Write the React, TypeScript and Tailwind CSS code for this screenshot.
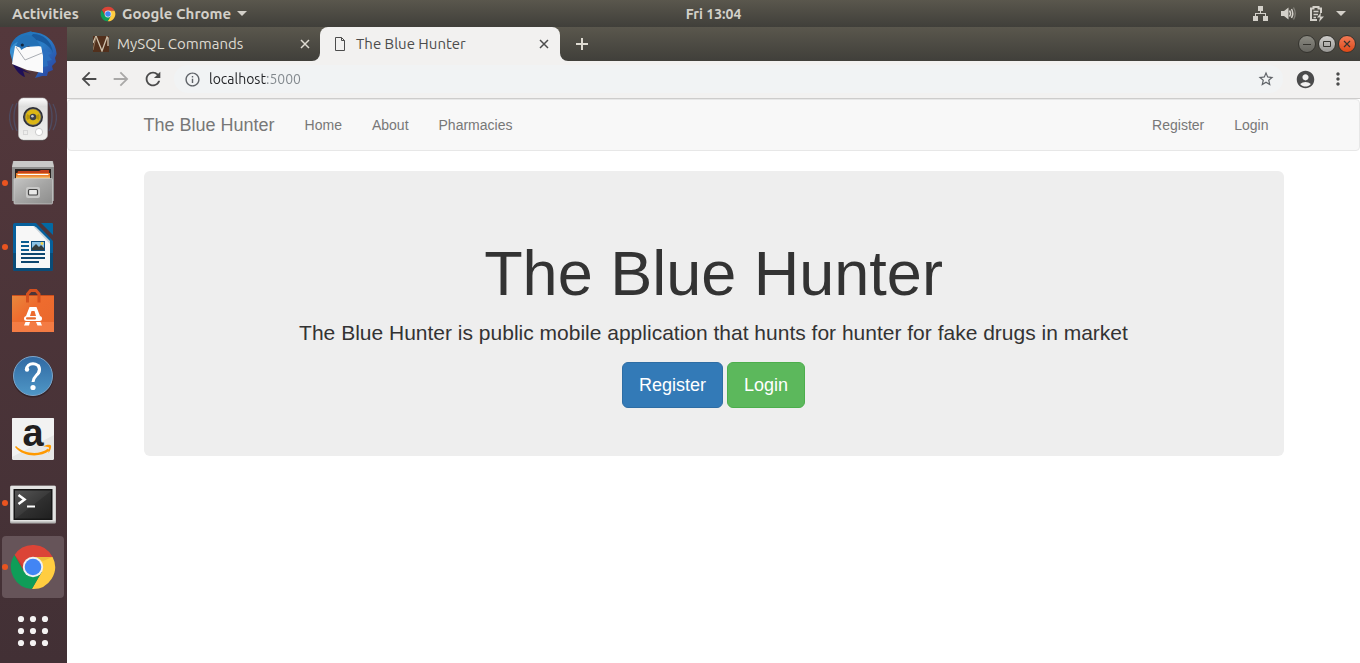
import { useState } from "react";
import type { ReactNode } from "react";
import {
  MdAccountCircle,
  MdArrowBack,
  MdArrowForward,
  MdInfoOutline,
  MdMoreVert,
  MdRefresh,
  MdStarBorder,
} from "react-icons/md";

function ChromeLogo({ className }: { className: string }) {
  return (
    <svg viewBox="0 0 48 48" className={className} aria-hidden="true">
      <path d="M5.5 12A22 22 0 0 1 43.6 14L24 14L15.3 29Z" fill="#db4437" />
      <path d="M43.6 14A22 22 0 0 1 22.9 46L32.7 29L24 14Z" fill="#ffcd40" />
      <path d="M22.9 46A22 22 0 0 1 5.5 12L15.3 29L32.7 29Z" fill="#0f9d58" />
      <path d="M24 14H43.6L34 18L31 17Z" fill="#b98b2c" opacity=".25" />
      <path d="M15.3 29L5.5 12L9 16L15 24Z" fill="#7d2a20" opacity=".25" />
      <circle cx="24" cy="24" r="10.2" fill="#f1f1f1" />
      <circle cx="24" cy="24" r="8.3" fill="#4285f4" />
    </svg>
  );
}

function MailIcon() {
  return (
    <svg viewBox="0 0 48 48" className="size-12" aria-hidden="true">
      <defs>
        <linearGradient id="bird" x1="0" y1="0" x2="1" y2="1">
          <stop offset="0" stopColor="#1d6fb5" />
          <stop offset=".5" stopColor="#2a7cc5" />
          <stop offset="1" stopColor="#2b3b9c" />
        </linearGradient>
      </defs>
      <path d="M3 32C7 40 12 45 16 46L14 40L22 43Z" fill="#1f0f57" />
      <path d="M1 22C0 12 7 4 16 2L23 0L22 1C36 1 47 10 47.6 23L46 27L47 31L43 35L44 39L39 41L38 45L33 45L26 47L30 40L20 14L3 22Z" fill="url(#bird)" />
      <path d="M24 3C34 3 43 10 44 22C40 13 32 9 20 8Z" fill="#195a9e" />
      <path d="M1 22C1 16 5 12 9 11L7 15L11 19L4 32Z" fill="#3a8fd0" />
      <path d="M6 15L17 16L32 15L34 24L34 42L18 39L3 33Z" fill="#fafafa" />
      <path d="M7 16L16 29L33 22" fill="none" stroke="#a9adb3" strokeWidth="1" />
      <path d="M9 11C11 5 17 3 23 5C28 8 29 13 33 16C24 13 18 15 12 19C12 16 9 16 7 15Z" fill="#2370b5" />
      <circle cx="13.3" cy="14" r="1.6" fill="#14273f" />
      <path d="M33 18L43 22L39 24L43 29L38 30L39 35L34 36L34 25Z" fill="#2b6fbf" />
    </svg>
  );
}

function SpeakerIcon() {
  return (
    <svg viewBox="0 0 48 48" className="size-12" aria-hidden="true">
      <defs>
        <linearGradient id="cab" x1="0" y1="0" x2="0" y2="1">
          <stop offset="0" stopColor="#ffffff" />
          <stop offset=".2" stopColor="#dededd" />
          <stop offset="1" stopColor="#f1f1f0" />
        </linearGradient>
      </defs>
      <g fill="none" stroke="#4c5f86" strokeWidth="1.4" opacity=".5">
        <path d="M8 8C4 16 4 28 8 36M4 9C-.5 17-.5 28 4 35M40 8C44 16 44 28 40 36M44 9C48.5 17 48.5 28 44 35" />
      </g>
      <rect x="9.5" y="5" width="29" height="41" rx="5" fill="#1d1518" opacity=".5" />
      <rect x="9.5" y="3" width="29" height="42" rx="5" fill="url(#cab)" stroke="#bcbcbc" strokeWidth=".6" />
      <circle cx="24" cy="22" r="10" fill="#2c2d33" />
      <circle cx="24" cy="22" r="8.6" fill="#5d5f66" />
      <circle cx="24" cy="22" r="7.7" fill="#dbb616" />
      <path d="M24 22L18 19A8 8 0 0 0 18 25ZM24 22L30 19A8 8 0 0 1 30 25Z" fill="#b8980f" />
      <circle cx="24" cy="22" r="3.2" fill="#3b3f4a" />
      <circle cx="23.4" cy="21.3" r="1.3" fill="#c8cbd2" />
      <circle cx="30" cy="37" r="3.6" fill="#fff" stroke="#c2c2c2" strokeWidth=".8" />
      <rect x="14.5" y="35.5" width="4" height="4" fill="none" stroke="#d6d6d6" />
    </svg>
  );
}

function FilesIcon() {
  return (
    <svg viewBox="0 0 48 48" className="size-12" aria-hidden="true">
      <defs>
        <linearGradient id="drawer" x1="0" y1="0" x2="1" y2="1">
          <stop offset="0" stopColor="#c5c5c4" />
          <stop offset=".5" stopColor="#a5a5a4" />
          <stop offset="1" stopColor="#8d8d8c" />
        </linearGradient>
      </defs>
      <path d="M4 2H44L45 8V42H3V8Z" fill="#8f8f8e" />
      <path d="M4.5 2H43.5L45 8H3Z" fill="#c9c9c8" />
      <rect x="6" y="10" width="36" height="12" fill="#2a2422" />
      <path d="M9 12H30L32 11H40V15H8Z" fill="#c4421c" />
      <path d="M7 14H41V21H7Z" fill="#e87722" />
      <path d="M8.5 15.5H39.5" stroke="#fff" strokeWidth="1.2" />
      <path d="M7 17.500H41V21H7Z" fill="#f3b765" />
      <rect x="5" y="19.5" width="38.5" height="25.5" rx="1" fill="url(#drawer)" stroke="#cfcfce" strokeWidth=".7" />
      <rect x="17" y="28" width="14" height="11" rx="2" fill="#c9c9c8" />
      <rect x="19.5" y="30.5" width="9" height="5.5" rx="1" fill="#e9e9e8" stroke="#454545" strokeWidth="1.2" />
    </svg>
  );
}

function WriterIcon() {
  return (
    <svg viewBox="0 0 48 48" className="size-12" aria-hidden="true">
      <path d="M6 0H27L44 18V46Q44 48 42 48H6Q4 48 4 46V2Q4 0 6 0Z" fill="#06609c" />
      <path d="M4 30H44V46Q44 48 42 48H6Q4 48 4 46Z" fill="#0a4c78" />
      <path d="M32 0H43Q44 0 44 1V12Z" fill="#0369a3" />
      <path d="M7 3H25L41 19V45H7Z" fill="#f7f7f7" />
      <path d="M27 4L41 18V21L24 3Z" fill="#c8d3da" />
      <path d="M12 19H20M12 23H20M12 27H20" stroke="#0a5c90" strokeWidth="2" />
      <path d="M12 31H36M12 35H36M12 39H30" stroke="#0d466f" strokeWidth="2" />
      <rect x="22.5" y="18.5" width="13" height="9" fill="#8cc3e6" stroke="#0d4f80" />
      <path d="M23 27V25L27 21L30 24L32 22L35 25V27Z" fill="#353d3c" />
      <circle cx="33" cy="20.500" r="1.4" fill="#f3d34a" />
    </svg>
  );
}

function SoftwareIcon() {
  return (
    <svg viewBox="0 0 48 48" className="size-12" aria-hidden="true">
      <defs>
        <linearGradient id="bag" x1="0" y1="0" x2="1" y2="1">
          <stop offset="0" stopColor="#e9883d" />
          <stop offset=".4" stopColor="#ee6c2e" />
          <stop offset="1" stopColor="#e9672d" />
        </linearGradient>
      </defs>
      <path d="M3 8H45V45H3Z" fill="url(#bag)" />
      <path d="M3 35H45V45H3Z" fill="#ff925f" opacity=".45" />
      <path d="M3 8H45V9H3Z" fill="#c94e1d" />
      <path d="M18.500 15.500V7L21.500 3.500H27L30 7V15.500" fill="none" stroke="#d4501f" strokeWidth="3" />
      <path d="M20.500 20H27.500L31 29H27L25.500 24H22.500L21 29H17Z" fill="#fff" />
      <rect x="15" y="29" width="18" height="5" rx="2.500" fill="#fff" />
      <rect x="17" y="30.300" width="10" height="2.300" rx="1" fill="#e86a2c" />
      <path d="M16.500 35H21L20 38.500H15ZM27 35H31.500L33 38.500H28.500Z" fill="#fff" />
    </svg>
  );
}

function HelpIcon() {
  return (
    <svg viewBox="0 0 48 48" className="size-12" aria-hidden="true">
      <defs>
        <linearGradient id="help" x1="0" y1="0" x2="0" y2="1">
          <stop offset="0" stopColor="#3069a3" />
          <stop offset="1" stopColor="#4f97c6" />
        </linearGradient>
      </defs>
      <circle cx="24" cy="26" r="20.500" fill="#201519" opacity=".45" />
      <circle cx="24" cy="25" r="19.500" fill="url(#help)" stroke="#7fa6ca" />
      <path d="M17.500 19C17 11 30.500 10.500 30.500 18.500C30.500 24 24.500 24 24 31" fill="none" stroke="#fff" strokeWidth="3" />
      <path d="M29 14C31 16 31 21 28.500 23.500" fill="none" stroke="#fff" strokeWidth="3" />
      <circle cx="18" cy="18.500" r="2.200" fill="#fff" />
      <circle cx="24" cy="36.500" r="2.600" fill="#fff" />
    </svg>
  );
}

function AmazonIcon() {
  return (
    <svg viewBox="0 0 48 48" className="size-12 overflow-visible" aria-hidden="true">
      <rect x="3" y="3" width="42" height="42" rx="1.500" fill="#e6e6e6" />
      <path d="M3 4Q3 3 4 3H44Q45 3 45 4V20L3 42Z" fill="#f2f2f2" />
      <text x="24" y="31" textAnchor="middle" fontFamily="Liberation Sans, sans-serif" fontWeight="700" fontSize="38" fill="#221f1f">a</text>
      <path d="M7 31C16 39.500 31 40 39 33.500L40.500 35.500C31 43 14 42 6 32Z" fill="#f90" />
      <path d="M34.500 31.500C37 29.500 41 29.500 42 30.500C42.500 32 41.500 35.500 39.500 38C39 37 40.500 33.500 40 32.500C39 31.500 36 32 34.500 31.500Z" fill="#f90" />
    </svg>
  );
}

function TerminalIcon() {
  return (
    <svg viewBox="0 0 48 48" className="size-12" aria-hidden="true">
      <defs>
        <linearGradient id="screen" x1="0" y1="0" x2="1" y2="1">
          <stop offset="0" stopColor="#555" />
          <stop offset=".5" stopColor="#3b3b3b" />
          <stop offset=".52" stopColor="#303030" />
          <stop offset="1" stopColor="#202020" />
        </linearGradient>
      </defs>
      <rect x="1" y="6.500" width="46" height="38" rx="1.500" fill="#b4b4b3" />
      <rect x="1.500" y="7" width="45" height="35.500" rx="1" fill="#e3e3e2" />
      <rect x="4.500" y="10" width="39" height="31" fill="#161616" />
      <rect x="6" y="11.500" width="36" height="28" fill="url(#screen)" />
      <path d="M9.500 16L15.500 20.500L9.500 25" fill="none" stroke="#fff" strokeWidth="2.600" />
      <path d="M18 27.500H26" stroke="#fff" strokeWidth="2" />
    </svg>
  );
}

function AppsIcon() {
  const at = [12, 24, 36];
  return (
    <svg viewBox="0 0 48 48" className="size-12" aria-hidden="true">
      {at.map((y) => at.map((x) => <circle key={`${x}-${y}`} cx={x} cy={y} r="3.100" fill="#f4f2f2" />))}
    </svg>
  );
}

type DockApp = { label: string; icon: ReactNode; running?: boolean; active?: boolean };

const dockApps: DockApp[] = [
  { label: "Mail", icon: <MailIcon /> },
  { label: "Music", icon: <SpeakerIcon /> },
  { label: "Files", icon: <FilesIcon />, running: true },
  { label: "Writer", icon: <WriterIcon />, running: true },
  { label: "Software", icon: <SoftwareIcon /> },
  { label: "Help", icon: <HelpIcon /> },
  { label: "Amazon", icon: <AmazonIcon /> },
  { label: "Terminal", icon: <TerminalIcon />, running: true },
  { label: "Chrome", icon: <ChromeLogo className="size-12" />, running: true, active: true },
  { label: "Show applications", icon: <AppsIcon /> },
];

function Caret() {
  return (
    <svg viewBox="0 0 10 5" className="h-[5px] w-2.5" aria-hidden="true">
      <path d="M0 0H10L5 5Z" fill="currentColor" />
    </svg>
  );
}

function TopBar() {
  return (
    <header className="grid h-[27px] shrink-0 grid-cols-[67px_1fr_auto_1fr] items-center bg-linear-to-b from-[#5a574d] to-[#403f3a] font-['Ubuntu','Noto_Sans',sans-serif] text-[15px] leading-5 font-semibold text-[#d3d0c9]">
      <div className="col-span-2 flex items-center pl-3">
        <button className="w-[88px] text-left">Activities</button>
        <button className="flex items-center gap-1.5">
          <ChromeLogo className="size-4" />
          Google Chrome
          <Caret />
        </button>
      </div>
      <button className="text-sm leading-5">Fri 13:04</button>
      <div className="flex items-center justify-end gap-3 pr-3.5">
        <svg viewBox="0 0 16 16" className="size-4" aria-label="Network" fill="currentColor">
          <path d="M6 0H11V5H9V7H14V10H16V15H11V10H13V8H4V10H6V15H1V10H3V7H8V5H6Z" />
        </svg>
        <svg viewBox="0 0 16 16" className="size-4" aria-label="Volume" fill="currentColor">
          <path d="M1 5H4L8.500 1.500V13.500L4 10H1Z" />
          <path d="M9.500 4.500Q11.500 7.500 9.500 10.500M11.500 3Q14 7.500 11.500 12" fill="none" stroke="currentColor" strokeWidth="1.500" />
          <path d="M13.500 1.500Q17 7.500 13.500 13.500" fill="none" stroke="currentColor" strokeWidth="1.300" opacity=".4" />
        </svg>
        <svg viewBox="0 0 16 16" className="size-4" aria-label="Battery" fill="none" stroke="currentColor">
          <path d="M9 14H3V2.500H5.500V1H10.500V2.500H13V7" strokeWidth="2" />
          <path d="M5.500 5.500H10.500M5.500 8.500H10M5.500 11.500H8" strokeWidth="1.500" />
          <path d="M13 6.500L9 11.500H12L11 16L16 10.500H12.500Z" fill="currentColor" stroke="none" />
        </svg>
        <Caret />
      </div>
    </header>
  );
}

function Dock() {
  return (
    <nav aria-label="Dock" className="flex w-[67px] shrink-0 flex-col justify-end gap-0.5 overflow-hidden bg-linear-to-b from-[#54383c] to-[#423035] px-0.5 pb-px">
      {dockApps.map((app) => (
        <button
          key={app.label}
          aria-label={app.label}
          className={
            app.active
              ? "relative flex size-[62px] shrink-0 items-center justify-center rounded-sm bg-[#665459]"
              : "relative flex size-[62px] shrink-0 items-center justify-center rounded-sm"
          }
        >
          {app.icon}
          {app.running && <span className="absolute left-0 size-1.5 rounded-full bg-[#e95420]" />}
        </button>
      ))}
    </nav>
  );
}

function CloseGlyph() {
  return (
    <svg viewBox="0 0 10 10" className="size-2.5" aria-hidden="true">
      <path d="M1 1L9 9M9 1L1 9" stroke="currentColor" strokeWidth="1.500" />
    </svg>
  );
}

function TabStrip() {
  return (
    <div className="flex h-[34px] shrink-0 bg-[#f2f1f0] font-['Ubuntu','Noto_Sans',sans-serif] text-[15px] text-[#dfdbd2]">
      <div className="flex w-[253px] items-center gap-2 rounded-br-lg bg-linear-to-b from-[#5a574d] to-[#403f3a] pr-2.5 pl-[26px]">
        <svg viewBox="0 0 16 16" className="size-4" aria-hidden="true">
          <rect width="16" height="16" fill="#52301c" />
          <path d="M0 7L3 0L9 15L14 1L15 2V10" fill="none" stroke="#cfc3ae" strokeWidth="1.300" />
          <path d="M3 1L0 14" fill="none" stroke="#a08a70" strokeWidth=".8" />
        </svg>
        <span className="flex-1">MySQL Commands</span>
        <button aria-label="Close MySQL Commands">
          <CloseGlyph />
        </button>
      </div>
      <div className="w-60 bg-linear-to-b from-[#5a574d] from-0% via-[#504e46] via-50% to-[#f2f1f0] to-50%">
        <div className="flex h-full items-center gap-2 rounded-t-lg bg-[#f2f1f0] pr-[11px] pl-3 text-[#4c4c4c]">
          <svg viewBox="0 0 16 16" className="size-4" aria-hidden="true">
            <path d="M3.500 1.500H9.500L12.500 4.500V14.500H3.500ZM9.500 1.500V4.500H12.500" fill="none" stroke="currentColor" strokeWidth="1" />
          </svg>
          <span className="flex-1">The Blue Hunter</span>
          <button aria-label="Close The Blue Hunter">
            <CloseGlyph />
          </button>
        </div>
      </div>
      <div className="flex flex-1 items-center justify-between rounded-bl-lg bg-linear-to-b from-[#5a574d] to-[#403f3a] pr-1 pl-4">
        <button aria-label="New tab">
          <svg viewBox="0 0 12 12" className="size-3" aria-hidden="true">
            <path d="M6 0V12M0 6H12" stroke="currentColor" strokeWidth="2" />
          </svg>
        </button>
        <div className="flex gap-0.5 text-[#35342f]">
          <button aria-label="Minimize" className="size-[18px] rounded-full border border-[#35342f] bg-linear-to-b from-[#8b8a82] to-[#65645e]">
            <svg viewBox="0 0 16 16" aria-hidden="true"><path d="M4 8.500H12" stroke="currentColor" /></svg>
          </button>
          <button aria-label="Maximize" className="size-[18px] rounded-full border border-[#35342f] bg-linear-to-b from-[#cfcecb] to-[#989794]">
            <svg viewBox="0 0 16 16" aria-hidden="true"><path d="M4.500 5.500H11.500V10.500H4.500Z" fill="none" stroke="currentColor" /></svg>
          </button>
          <button aria-label="Close window" className="size-[18px] rounded-full border border-[#35342f] bg-linear-to-b from-[#f27a54] to-[#dd4814]">
            <svg viewBox="0 0 16 16" aria-hidden="true"><path d="M5 5L11 11M11 5L5 11" stroke="currentColor" strokeWidth="1.200" /></svg>
          </button>
        </div>
      </div>
    </div>
  );
}

function Toolbar() {
  const [address, setAddress] = useState("localhost:5000");
  return (
    <div className="flex h-[38px] shrink-0 items-center border-b border-[#cdcccb] bg-[#f2f1f0] pr-3 pb-px pl-[11px] text-[#4b4b4b]">
      <div className="flex gap-2.5">
        <button aria-label="Back"><MdArrowBack size={22} /></button>
        <button aria-label="Forward" className="text-[#a9a8a7]"><MdArrowForward size={22} /></button>
        <button aria-label="Reload"><MdRefresh size={22} /></button>
      </div>
      <div className="ml-2.5 flex h-7 flex-1 items-center gap-2 rounded-full bg-[#f1f3f4] pr-2 pl-2.5 text-[#5f6368]">
        <MdInfoOutline size={17} />
        <input
          aria-label="Address"
          value={address}
          onChange={(e) => setAddress(e.target.value)}
          className="flex-1 bg-[linear-gradient(90deg,#202124_58px,#80868b_58px)] bg-clip-text font-['Ubuntu','Noto_Sans',sans-serif] text-sm text-transparent caret-black outline-none"
        />
        <button aria-label="Bookmark"><MdStarBorder size={18} /></button>
      </div>
      <button aria-label="Profile" className="ml-3"><MdAccountCircle size={21} /></button>
      <button aria-label="Menu" className="ml-3"><MdMoreVert size={20} /></button>
    </div>
  );
}

function Page() {
  return (
    <div className="flex-1 overflow-auto bg-white font-['Liberation_Sans',Arial,sans-serif] text-[#333]">
      <nav className="rounded border border-[#e7e7e7] bg-[#f8f8f8] text-sm text-[#777]">
        <div className="mx-auto flex h-[50px] max-w-[1170px] items-center px-[15px]">
          <a href="#" className="pr-[15px] text-lg">The Blue Hunter</a>
          <a href="#home" className="px-[15px]">Home</a>
          <a href="#about" className="px-[15px]">About</a>
          <a href="#pharmacies" className="px-[15px]">Pharmacies</a>
          <a href="#register" className="ml-auto px-[15px]">Register</a>
          <a href="#login" className="px-[15px]">Login</a>
        </div>
      </nav>
      <main className="mx-auto mt-5 max-w-[1170px] px-[15px]">
        <section className="rounded-md bg-[#eee] px-[60px] py-12 text-center">
          <h1 className="mt-5 mb-2.5 text-[63px] leading-[69px]">The Blue Hunter</h1>
          <p className="mb-[15px] text-[21px] leading-[29px]">
            The Blue Hunter is public mobile application that hunts for hunter for fake drugs in market
          </p>
          <div className="flex justify-center gap-1 text-lg leading-6 text-white">
            <a href="#register" className="rounded-md border border-[#2e6da4] bg-[#337ab7] px-4 py-2.5">Register</a>
            <a href="#login" className="rounded-md border border-[#4cae4c] bg-[#5cb85c] px-4 py-2.5">Login</a>
          </div>
        </section>
      </main>
    </div>
  );
}

export default function App() {
  return (
    <div className="flex h-screen flex-col overflow-hidden">
      <TopBar />
      <div className="flex min-h-0 flex-1">
        <Dock />
        <div className="flex min-w-0 flex-1 flex-col">
          <TabStrip />
          <Toolbar />
          <Page />
        </div>
      </div>
    </div>
  );
}
